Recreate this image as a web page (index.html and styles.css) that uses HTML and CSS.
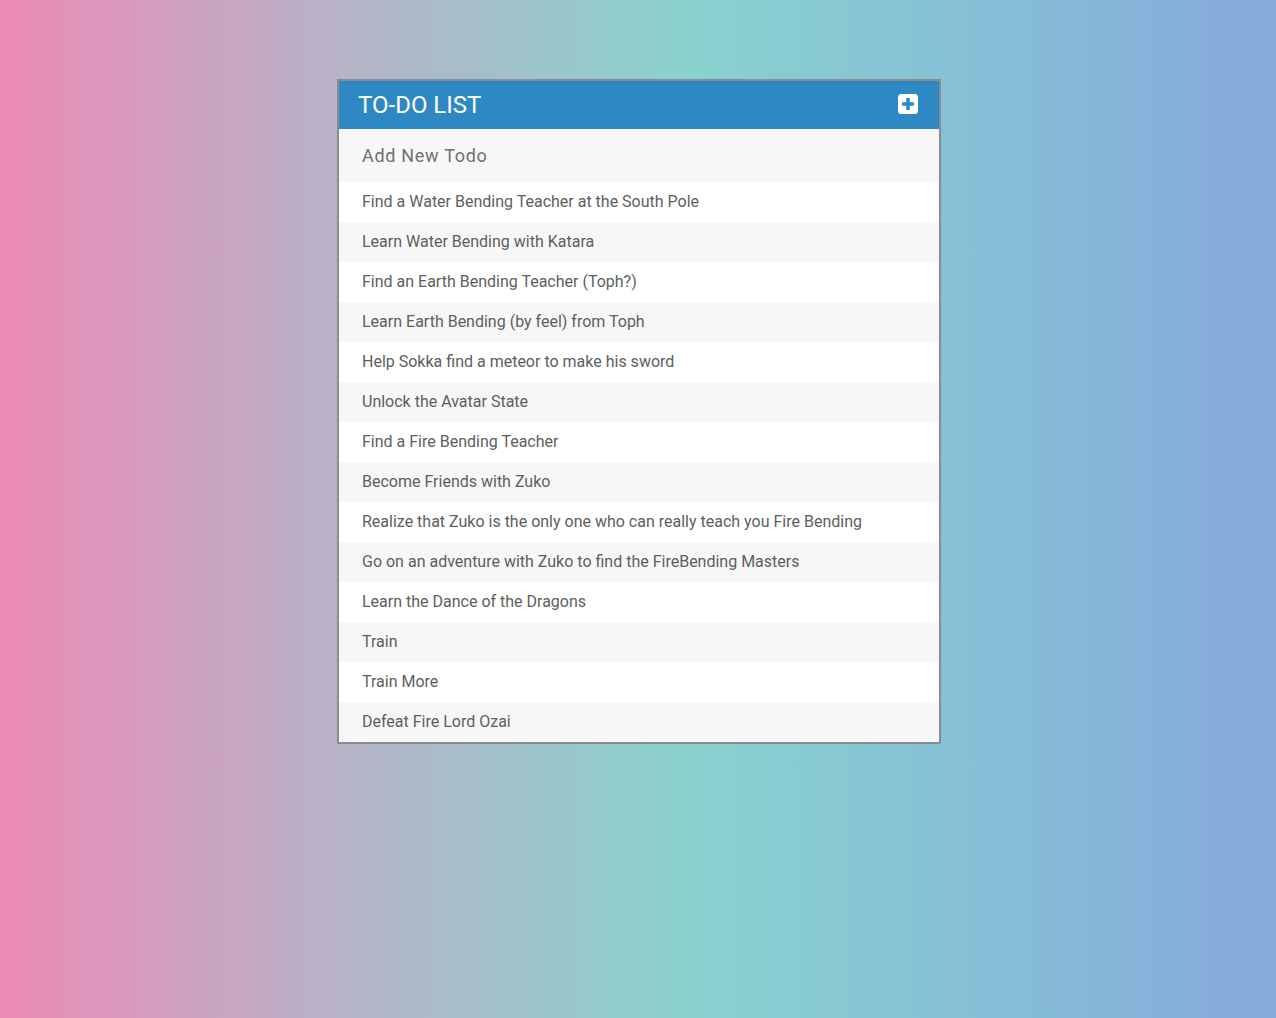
FILE: index.html
```html
<!DOCTYPE html>
<html>
<head>
<meta charset="utf-8">
<link rel="stylesheet" href="styles.css">
</head>
<body>
<div class="todo">
  <header class="todo-head">
    <h1 class="todo-title">TO-DO LIST</h1>
    <svg class="add-icon" width="20" height="20" viewBox="0 0 20 20">
      <rect x="0" y="0" width="20" height="20" rx="3.5" fill="#fff"/>
      <path d="M8.2 4h3.6v4.2H16v3.6h-4.2V16H8.2v-4.2H4V8.2h4.2z" fill="#2e88c4"/>
    </svg>
  </header>
  <div class="todo-input">Add New Todo</div>
  <ul class="todo-list">
    <li>Find a Water Bending Teacher at the South Pole</li>
    <li>Learn Water Bending with Katara</li>
    <li>Find an Earth Bending Teacher (Toph?)</li>
    <li>Learn Earth Bending (by feel) from Toph</li>
    <li>Help Sokka find a meteor to make his sword</li>
    <li>Unlock the Avatar State</li>
    <li>Find a Fire Bending Teacher</li>
    <li>Become Friends with Zuko</li>
    <li>Realize that Zuko is the only one who can really teach you Fire Bending</li>
    <li>Go on an adventure with Zuko to find the FireBending Masters</li>
    <li>Learn the Dance of the Dragons</li>
    <li>Train</li>
    <li>Train More</li>
    <li>Defeat Fire Lord Ozai</li>
  </ul>
</div>
</body>
</html>
```
FILE: styles.css
```css
html, body {
  margin: 0;
  padding: 0;
  height: 100%;
}
body {
  background: linear-gradient(to right, #ec8ab6 0%, #b9b1c6 25%, #89d2cf 54%, #85bcd7 80%, #87a9dc 100%);
  font-family: Roboto, "Liberation Sans", sans-serif;
  padding-top: 79px;
  padding-left: 2px;
  box-sizing: border-box;
}
.todo {
  width: 600px;
  margin: 0 auto;
  border: 2px solid #8a8c8e;
  background: #fff;
  box-sizing: content-box;
}
.todo-head {
  background: #2e88c4;
  height: 48px;
  display: flex;
  align-items: center;
  justify-content: space-between;
  padding: 0 21px 0 19px;
}
.todo-title {
  margin: 0;
  font-size: 24px;
  font-weight: 400;
  color: #fff;
  letter-spacing: 0;
}
.add-icon {
  display: block;
  margin-top: -2px;
}
.todo-input {
  height: 53px;
  background: #f7f7f7;
  color: #707070;
  font-size: 18px;
  display: flex;
  align-items: center;
  padding-left: 23px;
  box-sizing: border-box;
  letter-spacing: 0.7px;
}
.todo-list {
  list-style: none;
  margin: 0;
  padding: 0;
}
.todo-list li {
  height: 40px;
  line-height: 40px;
  padding-left: 23px;
  font-size: 16px;
  color: #5e5e5e;
  background: #fff;
}
.todo-list li:nth-child(even) {
  background: #f7f7f7;
}
```
